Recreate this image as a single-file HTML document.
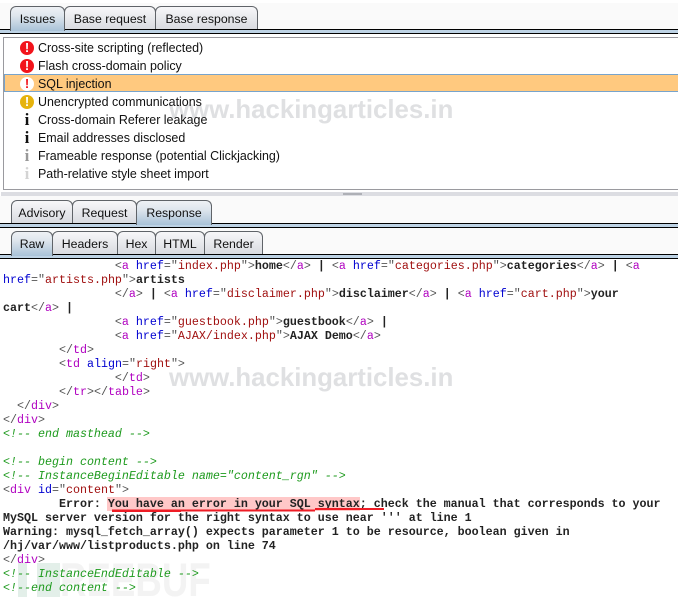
<!DOCTYPE html>
<html><head><meta charset="utf-8">
<style>
html,body{margin:0;padding:0;background:#fff}
#p{position:relative;width:678px;height:604px;overflow:hidden;background:#fff;font-family:"Liberation Sans",sans-serif}
.a{position:absolute}
.tab{position:absolute;box-sizing:border-box;border:1px solid #5f6368;border-bottom:none;border-radius:6px 6px 0 0;background:linear-gradient(#f7f7f9,#d9dbe0);font-size:12.3px;color:#111;text-align:center;line-height:24px}
.tab.on{background:linear-gradient(#eef1f5,#dfe6ed 35%,#a9c2d8);z-index:2}
.row{position:absolute;left:38px;font-size:12.45px;line-height:18px;color:#111;white-space:pre}
.ic{position:absolute;left:20px;width:14px;height:14px;border-radius:50%;color:#fff;text-align:center;font:bold 13px/14px "Liberation Sans",sans-serif}
.inf{position:absolute;left:20px;width:14px;text-align:center;font:bold 17px/18px "Liberation Serif",serif}
.wm{position:absolute;left:169px;font:bold 25.8px/30px "Liberation Sans",sans-serif;color:#dfe0e2;white-space:pre}
#code{position:absolute;left:3px;top:259px;margin:0;font:11.67px/14px "Liberation Mono",monospace;color:#555;white-space:pre}
#code i{color:#1d9a1d}
#code u{text-decoration:none;color:#b000c0}
#code s{text-decoration:none;color:#0000d0}
#code em{font-style:normal;color:#a01010}
#code b{color:#222}
</style></head><body><div id="p">

<div class="a" style="left:0;top:3px;width:678px;height:26px;background:#fafafa"></div>
<div class="a" style="left:0;top:29px;width:678px;height:5px;box-sizing:border-box;border-top:1px solid #000;border-bottom:1px solid #000;background:#bdd2e4"></div>
<div class="tab on" style="left:10px;top:6px;width:55px;height:25px">Issues</div>
<div class="tab" style="left:64px;top:6px;width:92px;height:23px">Base request</div>
<div class="tab" style="left:155px;top:6px;width:103px;height:23px">Base response</div>

<div class="wm" style="top:95px">www.hackingarticles.in</div>

<div class="a" style="left:3px;top:37px;width:676px;height:153px;box-sizing:border-box;border:1px solid #9a9a9f;border-right:none"></div>
<div class="a" style="left:4px;top:74px;width:674px;height:18px;box-sizing:border-box;border-top:1px solid #78a4cc;border-bottom:1px solid #78a4cc;border-left:1px solid #78a4cc;background:#ffc97f"></div>

<div class="ic" style="top:41px;background:#f2141c">!</div>
<div class="ic" style="top:59px;background:#f2141c">!</div>
<div class="ic" style="top:77px;background:#fff;color:#f2141c">!</div>
<div class="ic" style="top:95px;background:#e6b30c">!</div>
<div class="inf" style="top:111px;color:#111">i</div>
<div class="inf" style="top:129px;color:#111">i</div>
<div class="inf" style="top:147px;color:#999">i</div>
<div class="inf" style="top:165px;color:#d4d4d4">i</div>

<div class="row" style="top:39px">Cross-site scripting (reflected)</div>
<div class="row" style="top:57px">Flash cross-domain policy</div>
<div class="row" style="top:75px">SQL injection</div>
<div class="row" style="top:93px">Unencrypted communications</div>
<div class="row" style="top:111px">Cross-domain Referer leakage</div>
<div class="row" style="top:129px">Email addresses disclosed</div>
<div class="row" style="top:147px">Frameable response (potential Clickjacking)</div>
<div class="row" style="top:165px">Path-relative style sheet import</div>

<div class="a" style="left:1px;top:192px;width:677px;height:4px;background:#dcdde2"></div>
<div class="a" style="left:343px;top:193px;width:19px;height:2px;background:#aeb0b6"></div>
<div class="a" style="left:0;top:196px;width:678px;height:27px;background:#fafafa"></div>
<div class="a" style="left:0;top:223px;width:678px;height:5px;box-sizing:border-box;border-top:1px solid #000;border-bottom:1px solid #000;background:#bdd2e4"></div>
<div class="tab" style="left:11px;top:200px;width:62px;height:23px">Advisory</div>
<div class="tab" style="left:72px;top:200px;width:65px;height:23px">Request</div>
<div class="tab on" style="left:136px;top:200px;width:76px;height:25px">Response</div>

<div class="a" style="left:0;top:228px;width:678px;height:26px;background:#fafafa"></div>
<div class="a" style="left:0;top:254px;width:678px;height:5px;box-sizing:border-box;border-top:1px solid #000;border-bottom:1px solid #000;background:#bdd2e4"></div>
<div class="tab on" style="left:11px;top:231px;width:42px;height:25px">Raw</div>
<div class="tab" style="left:52px;top:231px;width:66px;height:23px">Headers</div>
<div class="tab" style="left:117px;top:231px;width:39px;height:23px">Hex</div>
<div class="tab" style="left:155px;top:231px;width:50px;height:23px">HTML</div>
<div class="tab" style="left:204px;top:231px;width:59px;height:23px">Render</div>

<div class="wm" style="top:363px">www.hackingarticles.in</div>
<div class="a" style="left:18px;top:563px;width:9px;height:34px;background:#e3efe9"></div>
<div class="a" style="left:37px;top:563px;width:23px;height:34px;background:#e3efe9"></div>
<div class="a" style="left:60px;top:556px;font:bold 47px/48px 'Liberation Sans',sans-serif;color:#f3f3f3;white-space:pre;transform:scaleX(.78);transform-origin:0 0">REEBUF</div>

<div class="a" style="left:107px;top:497px;width:253px;height:14px;background:#ffc8c8"></div>

<pre id="code">                &lt;<u>a</u> <s>href</s>="<em>index.php</em>"&gt;<b>home</b>&lt;/<u>a</u>&gt; <b>|</b> &lt;<u>a</u> <s>href</s>="<em>categories.php</em>"&gt;<b>categories</b>&lt;/<u>a</u>&gt; <b>|</b> &lt;<u>a</u>
<s>href</s>="<em>artists.php</em>"&gt;<b>artists</b>
                &lt;/<u>a</u>&gt; <b>|</b> &lt;<u>a</u> <s>href</s>="<em>disclaimer.php</em>"&gt;<b>disclaimer</b>&lt;/<u>a</u>&gt; <b>|</b> &lt;<u>a</u> <s>href</s>="<em>cart.php</em>"&gt;<b>your</b>
<b>cart</b>&lt;/<u>a</u>&gt; <b>|</b>
                &lt;<u>a</u> <s>href</s>="<em>guestbook.php</em>"&gt;<b>guestbook</b>&lt;/<u>a</u>&gt; <b>|</b>
                &lt;<u>a</u> <s>href</s>="<em>AJAX/index.php</em>"&gt;<b>AJAX Demo</b>&lt;/<u>a</u>&gt;
        &lt;/<u>td</u>&gt;
        &lt;<u>td</u> <s>align</s>="<em>right</em>"&gt;
                &lt;/<u>td</u>&gt;
        &lt;/<u>tr</u>&gt;&lt;/<u>table</u>&gt;
  &lt;/<u>div</u>&gt;
&lt;/<u>div</u>&gt;
<i>&lt;!-- end masthead --&gt;</i>

<i>&lt;!-- begin content --&gt;</i>
<i>&lt;!-- InstanceBeginEditable name="content_rgn" --&gt;</i>
&lt;<u>div</u> <s>id</s>="<em>content</em>"&gt;
<b>        Error: You have an error in your SQL syntax; check the manual that corresponds to your
MySQL server version for the right syntax to use near ''' at line 1
Warning: mysql_fetch_array() expects parameter 1 to be resource, boolean given in
/hj/var/www/listproducts.php on line 74</b>
&lt;/<u>div</u>&gt;
<i>&lt;!-- InstanceEndEditable --&gt;</i>
<i>&lt;!--end content --&gt;</i></pre>

<svg class="a" style="left:0;top:0" width="678" height="604"><path d="M112 509.5H181V509.5H315V508H384V510H315V511.5H181V512H112Z" fill="#ee1c25"/></svg>
</div></body></html>
